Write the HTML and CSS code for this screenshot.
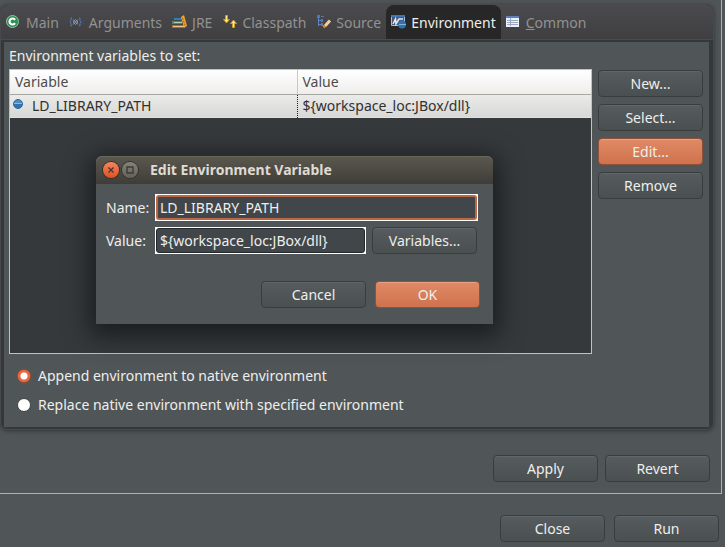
FILE: index.html
```html
<!DOCTYPE html>
<html lang="en">
<head>
<meta charset="utf-8">
<title>Run Configurations</title>
<link rel="stylesheet" href="styles.css">
</head>
<body>
<main class="window">
  <section class="pane">
    <div class="folder">
      <div class="tabs" role="tablist">
        <button class="tab" role="tab" type="button">
          <svg class="icon" viewBox="0 0 16 16"><circle cx="6.500" cy="6.500" r="6" fill="#2f8f55" stroke="#8cc79c"/><path d="M9 4.800A3 3 0 1 0 9 8.200" fill="none" stroke="#fff" stroke-width="2.200"/></svg><span>Main</span>
        </button>
        <button class="tab" role="tab" type="button">
          <svg class="icon" viewBox="0 0 16 16" fill="none" stroke="#5878b4"><path d="M3 3H2v2.500L1 7l1 1.500V11h1M10 3h1v2.500L12 7l-1 1.500V11h-1"/><path d="M13 6h3M13 8.500h3" stroke="#34507f"/><path d="M4 4.500l5 5M6.500 4.500l2.500 2.500M4 7l2.500 2.500M9 4.500l-5 5M6.500 4.500L4 7M9 7L6.500 9.500" stroke="#91a8cf" stroke-width=".8"/></svg><span>Arguments</span>
        </button>
        <button class="tab" role="tab" type="button">
          <svg class="icon" viewBox="0 0 16 16"><path d="M2 3h8v2H2z" fill="#2f7fb5"/><path d="M0 6h10v3H0z" fill="#319461"/><path d="M2 7h8v1H2z" fill="#9fd5b4"/><path d="M0 10h12v3H0z" fill="#c95c2b"/><path d="M1 11h11v1H1z" fill="#f6c08a"/><path d="M9 2l3-2 3 11-3 2z" fill="#f1a52c"/><path d="M10.500 3l3 8.500" stroke="#a95d13" stroke-dasharray="2 1"/></svg><span>JRE</span>
        </button>
        <button class="tab" role="tab" type="button">
          <svg class="icon" viewBox="0 0 16 16" fill="#ffe98a" stroke="#d09a25"><path d="M3.500.500h2v4h2L4.500 8l-3-3.500h2z"/><path d="M10.500 12.500v-4h-2L11.500 5l3 3.500h-2v4z"/></svg><span>Classpath</span>
        </button>
        <button class="tab" role="tab" type="button">
          <svg class="icon" viewBox="0 0 16 16"><path d="M2.500 2v9M2.500 5.500H6M2.500 9.500H6" stroke="#5f86c6" fill="none"/><path d="M1 0h3v3H1zM5 1h3v1H5zM5 4h2v3H5zM5 8h2v3H5z" fill="#5276b7"/><path d="M14 5.500L9 11" stroke="#f0cfa0" stroke-width="3"/><path d="M6 9.500l2 4 2.500-2z" fill="#dc8d23"/></svg><span>Source</span>
        </button>
        <button class="tab tab-active" role="tab" type="button" aria-selected="true">
          <svg class="icon" viewBox="0 0 16 16"><path d="M.5.500h13v10H.5z" fill="#4a5570" stroke="#a8bddd"/><path d="M0 0h14v2H0z" fill="#3d73ba"/><path d="M2 9l2.500-5 .500 5 3-5h4" stroke="#e4e8ee" fill="none" stroke-width="1.500"/><circle cx="11" cy="9.500" r="4" fill="#2f73b0"/><path d="M8 9.500h7" stroke="#7fb2dd"/></svg><span>Environment</span>
        </button>
        <button class="tab" role="tab" type="button">
          <svg class="icon" viewBox="0 0 16 16"><path d="M0 1h13v11H0z" fill="#eef1f7"/><path d="M0 1h13v2H0z" fill="#5d7fbd"/><path d="M1 5.500h11M1 7.500h11M1 9.500h11M4.500 3v8" stroke="#9aa8c4"/></svg><span><u>C</u>ommon</span>
        </button>
      </div>
      <div class="content" role="tabpanel">
        <p class="caption">Environment variables to set:</p>
        <div class="editor">
          <div class="list">
            <table class="vars">
              <thead><tr><th class="col-name">Variable</th><th>Value</th></tr></thead>
              <tbody><tr><td><span class="cell"><i class="dot"></i>LD_LIBRARY_PATH</span></td><td>${workspace_loc:JBox/dll}</td></tr></tbody>
            </table>
          </div>
          <div class="actions">
            <button class="btn" type="button">New...</button>
            <button class="btn" type="button">Select...</button>
            <button class="btn btn-primary" type="button">Edit...</button>
            <button class="btn" type="button">Remove</button>
          </div>
        </div>
        <div class="modes">
          <label class="mode"><input type="radio" name="mode" checked>Append environment to native environment</label>
          <label class="mode"><input type="radio" name="mode">Replace native environment with specified environment</label>
        </div>
      </div>
    </div>
    <div class="row pane-buttons">
      <button class="btn" type="button">Apply</button>
      <button class="btn" type="button">Revert</button>
    </div>
  </section>
  <footer class="row window-buttons">
    <button class="btn" type="button">Close</button>
    <button class="btn" type="button">Run</button>
  </footer>
</main>

<form class="dialog" role="dialog" aria-labelledby="dialog-title">
  <header class="titlebar">
    <button class="round round-close" type="button" aria-label="Close dialog"><svg viewBox="0 0 16 16"><path d="M5.500 5.500l5 5M10.500 5.500l-5 5"/></svg></button>
    <button class="round" type="button" aria-label="Maximize"><svg viewBox="0 0 16 16"><path d="M5 5h6v6H5z"/></svg></button>
    <h1 id="dialog-title">Edit Environment Variable</h1>
  </header>
  <div class="fields">
    <label for="name">Name:</label>
    <span class="box box-focus"><input id="name" type="text" value="LD_LIBRARY_PATH"></span>
    <label for="value">Value:</label>
    <div class="value-row">
      <span class="box"><input id="value" type="text" value="${workspace_loc:JBox/dll}"></span>
      <button class="btn" type="button">Variables...</button>
    </div>
  </div>
  <div class="row dialog-buttons">
    <button class="btn" type="button">Cancel</button>
    <button class="btn btn-primary" type="submit">OK</button>
  </div>
</form>
</body>
</html>
```

FILE: styles.css
```css
* { box-sizing: border-box; }

body {
  margin: 0;
  min-height: 100vh;
  background: #505658;
  color: #eeeeec;
  font: 14px/20px "Noto Sans", "Open Sans", sans-serif;
}

button, input { font: inherit; color: inherit; }

.pane {
  margin-right: 3px;
  padding: 4px 7px 11px 0;
  border-right: 1px solid #b1b1aa;
  border-bottom: 1px solid #b1b1aa;
}

.folder {
  border: 1px solid #48494b;
  border-radius: 8px;
  background: #34383b;
  box-shadow: 0 1px 4px #303335;
  overflow: hidden;
}

.tabs {
  display: flex;
  height: 35px;
  background: linear-gradient(#4b4a4d, #3f3f41);
  border-bottom: 1px solid #4a4b4c;
}

.tab {
  display: flex;
  align-items: center;
  gap: 4px;
  padding: 1px 5px 0;
  border: 0;
  background: none;
  color: #929292;
}

.tab-active {
  background: #272727;
  color: #eeeeec;
  border-radius: 8px 8px 0 0;
}

.icon { width: 16px; height: 16px; }

.content {
  margin: 2px 4px 2px 3px;
  padding: 4px 6px 12px 5px;
  background: #505658;
}

.caption { margin: 0 0 3px; }

.editor { display: flex; gap: 6px; }

.list {
  flex: 1;
  height: 285px;
  border: 1px solid #c2c2bb;
  background: #35393c;
}

.vars { width: 100%; border-collapse: collapse; table-layout: fixed; color: #303030; }
.vars th, .vars td { padding: 0 5px; text-align: left; font-weight: 400; height: 24px; }
.vars th { color: #4c4c4c; border-bottom: 1px solid #a8a8a2; background: linear-gradient(#fff, #eeedeb); }
.vars th + th { border-left: 1px solid #c8c8c4; }
.vars td { background: linear-gradient(#ebebea, #d7d7d5); }
.vars td + td { border-left: 1px dotted #222; }
.vars td:first-child { padding-left: 3px; }
.vars .col-name { width: 49.4%; }

.cell { display: flex; align-items: center; gap: 9px; }

.dot {
  width: 10px;
  height: 10px;
  margin-bottom: 5px;
  border: 1px solid #2e6799;
  border-radius: 50%;
  background: linear-gradient(#4f8cc0 40%, #8dbbdf 40%, #8dbbdf 55%, #2f74b0 55%);
}

.actions { display: flex; flex-direction: column; gap: 7px; padding-top: 1px; }

.btn {
  width: 105px;
  height: 27px;
  padding: 0;
  border: 1px solid #393d3f;
  border-radius: 4px;
  background: linear-gradient(#565c5f, #4a4f50);
  box-shadow: inset 0 1px #606669;
}

.btn-primary {
  border-color: #8f513a;
  background: linear-gradient(#e08a66, #cf724d);
  box-shadow: inset 0 1px #ea9f80;
}

.modes { display: flex; flex-direction: column; gap: 9px; padding: 12px 0 0 8px; }
.mode { display: flex; align-items: center; gap: 7px; }

.mode input {
  appearance: none;
  width: 14px;
  height: 14px;
  margin: 0;
  border: 1px solid #3d4143;
  border-radius: 50%;
  background: #fff;
}

.mode input:checked { border-color: #a84c2c; background: radial-gradient(circle, #fff 3px, #ec6b40 4px); }

.row { display: flex; justify-content: flex-end; }
.pane-buttons { gap: 7px; padding: 25px 4px 0 0; }
.window-buttons { gap: 9px; padding: 21px 6px 5px 0; }

.dialog {
  position: absolute;
  left: 96px;
  top: 156px;
  width: 397px;
  border-radius: 6px 6px 0 0;
  background: #505658;
  box-shadow: 0 6px 24px 6px rgba(0, 0, 0, .5);
}

.titlebar {
  display: flex;
  align-items: center;
  gap: 3px;
  height: 28px;
  padding: 0 7px;
  border-radius: 6px 6px 0 0;
  background: linear-gradient(#5b584f, #3e3d38);
  box-shadow: inset 0 1px #69665b;
}

.titlebar h1 { margin: 0 0 0 9px; font-size: 14px; line-height: 20px; color: #dfdbd2; }

.round {
  width: 16px;
  height: 16px;
  padding: 0;
  border: 0;
  border-radius: 50%;
  background: linear-gradient(#858379, #62615a);
  box-shadow: 0 0 0 1px #33322e;
}

.round-close { background: linear-gradient(#f58461, #e2501f); }
.round svg { display: block; fill: none; stroke: #3c3b37; stroke-width: 1.4; }

.fields {
  display: grid;
  grid-template-columns: 45px 1fr;
  gap: 6px 4px;
  align-items: center;
  padding: 10px 15px 0 10px;
}

.value-row { display: flex; gap: 6px; padding-right: 1px; }

.box { display: flex; flex: 1; height: 27px; border: 1px solid #fff; background: #fff; }

.box input {
  flex: 1;
  min-width: 0;
  padding: 0 3px;
  border: 1px solid #26292b;
  border-radius: 3px;
  outline: 0;
  background: #41464a;
}

.box-focus input { border: 2px solid #bd6744; padding: 0 2px; }

.dialog-buttons { gap: 9px; padding: 27px 13px 16px; }
```
